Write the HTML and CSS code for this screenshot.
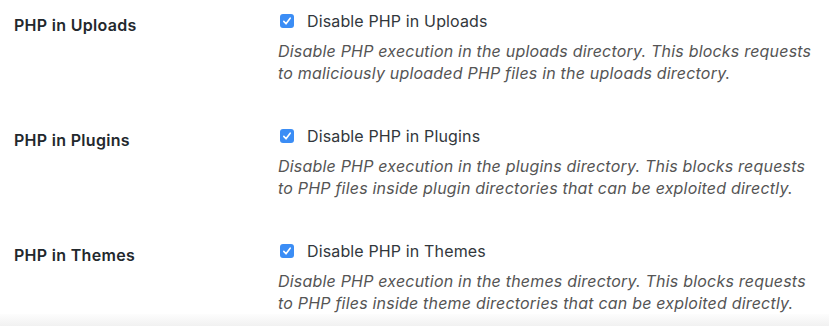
FILE: index.html
```html
<!DOCTYPE html>
<html>
<head>
<meta charset="utf-8">
<link rel="stylesheet" href="styles.css">
</head>
<body>
<div class="settings">
  <div class="row">
    <div class="label">PHP in Uploads</div>
    <div class="field">
      <label class="check"><span class="box"><svg viewBox="0 0 14 14" width="14" height="14"><path d="M3.8 7.4 L6 9.8 L10.2 4.2" fill="none" stroke="#fff" stroke-width="1.6" stroke-linecap="round" stroke-linejoin="round"/></svg></span>Disable PHP in Uploads</label>
      <p class="description">Disable PHP execution in the uploads directory. This blocks requests to maliciously uploaded PHP files in the uploads directory.</p>
    </div>
  </div>
  <div class="row">
    <div class="label">PHP in Plugins</div>
    <div class="field">
      <label class="check"><span class="box"><svg viewBox="0 0 14 14" width="14" height="14"><path d="M3.8 7.4 L6 9.8 L10.2 4.2" fill="none" stroke="#fff" stroke-width="1.6" stroke-linecap="round" stroke-linejoin="round"/></svg></span>Disable PHP in Plugins</label>
      <p class="description">Disable PHP execution in the plugins directory. This blocks requests to PHP files inside plugin directories that can be exploited directly.</p>
    </div>
  </div>
  <div class="row last">
    <div class="label">PHP in Themes</div>
    <div class="field">
      <label class="check"><span class="box"><svg viewBox="0 0 14 14" width="14" height="14"><path d="M3.8 7.4 L6 9.8 L10.2 4.2" fill="none" stroke="#fff" stroke-width="1.6" stroke-linecap="round" stroke-linejoin="round"/></svg></span>Disable PHP in Themes</label>
      <p class="description">Disable PHP execution in the themes directory. This blocks requests to PHP files inside theme directories that can be exploited directly.</p>
    </div>
  </div>
</div>
<div class="footer"></div>
</body>
</html>
```
FILE: styles.css
```css
html, body {
  margin: 0;
  padding: 0;
  background: #fff;
}
body {
  font-family: Inter, "Liberation Sans", Arial, sans-serif;
  color: #32373c;
  width: 829px;
  height: 326px;
  overflow: hidden;
}
.settings {
  padding-left: 14px;
}
.row {
  display: grid;
  grid-template-columns: 264px 1fr;
  padding-bottom: 31px;
}
.row.last {
  padding-bottom: 0;
}
.label {
  padding-top: 15px;
  font-weight: 600;
  font-size: 16px;
  line-height: 20px;
  letter-spacing: 0.3px;
  color: #23282d;
}
.field {
  padding-top: 10px;
}
.check {
  display: flex;
  align-items: center;
  font-size: 16px;
  line-height: 22px;
  letter-spacing: 0.14px;
  color: #32373c;
}
.box {
  width: 14px;
  height: 14px;
  border-radius: 3px;
  background: #3b8df5;
  margin-left: 2px;
  margin-right: 13px;
  display: flex;
}
.description {
  margin: 8px 0 0;
  font-style: italic;
  font-size: 16px;
  line-height: 22px;
  letter-spacing: 0.2px;
  color: #555;
  width: 540px;
}
.footer {
  height: 12px;
  background: linear-gradient(#fdfdfd, #f1f1f1);
}
```
